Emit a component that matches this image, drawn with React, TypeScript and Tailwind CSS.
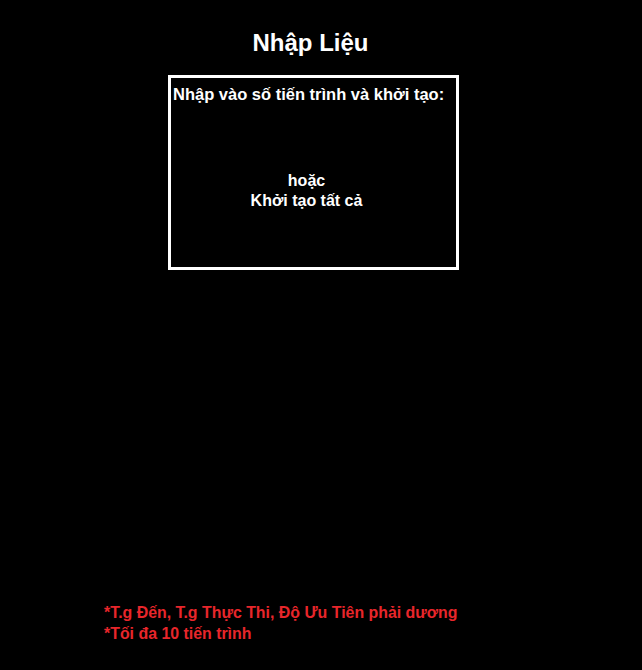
export default function App() {
  return (
    <div
      className="w-full h-[670px] bg-black text-white flex flex-col"
      style={{ fontFamily: '"Liberation Sans", Arial, sans-serif' }}
    >
      <div className="ml-[168px] w-[291px] flex flex-col">
        <h1 className="mt-[29px] h-[28px] text-[24px] leading-[28px] font-bold text-center pr-[6px]">
          Nhập Liệu
        </h1>
        <div className="mt-[18px] h-[195px] border-[3px] border-white flex flex-col">
          <p className="mt-[6px] ml-[2px] text-[16.5px] leading-[20px] font-bold whitespace-nowrap">
            Nhập vào số tiến trình và khởi tạo:
          </p>
          <div className="mt-[67px] flex flex-col items-center pr-[14px] text-[16px] leading-[20px] font-bold">
            <span>hoặc</span>
            <span>Khởi tạo tất cả</span>
          </div>
        </div>
      </div>
      <div className="mt-[332px] ml-[104px] text-[15.9px] leading-[21px] font-bold text-[#e8262b]">
        <p>*T.g Đến, T.g Thực Thi, Độ Ưu Tiên phải dương</p>
        <p>*Tối đa 10 tiến trình</p>
      </div>
    </div>
  );
}
